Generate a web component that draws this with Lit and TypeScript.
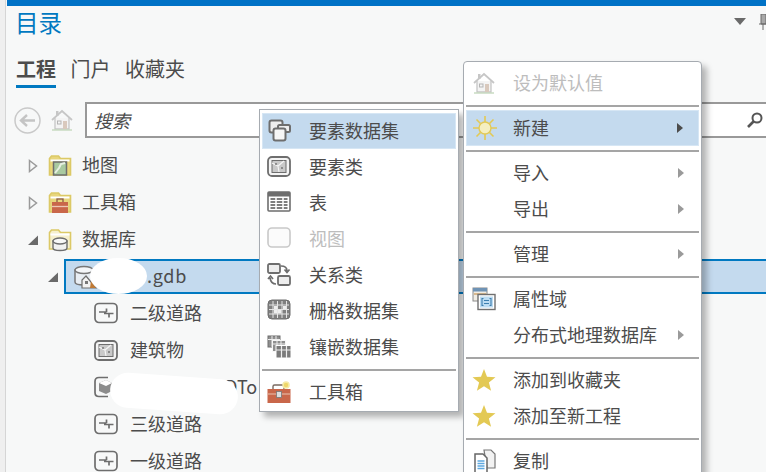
import { LitElement, html, css, svg } from "lit";
import { customElement } from "lit/decorators.js";

const G = "#6e6e6e";

const frame = (inner: unknown) => svg`<rect x="1" y="2" width="22" height="19" rx="4" fill="#f4f4f4" stroke="${G}" stroke-width="1.800"/>${inner}`;

const ICONS: Record<string, unknown> = {
  line: svg`<rect x="1" y="1.500" width="22" height="19" rx="4" fill="none" stroke="${G}" stroke-width="1.700"/><path d="M5 10h7.500M12.500 6.500v3.500M10 11.500h9.500M15 11.500v4" fill="none" stroke="${G}" stroke-width="1.700"/>`,
  poly: svg`${frame(svg`<rect x="5" y="5.500" width="14" height="12" fill="#c9c9c9" stroke="${G}"/><path d="M5 8l6 3 6-5M11 11l1 6" stroke="#f4f4f4" stroke-width="1.200" fill="none"/><circle cx="9" cy="9" r=".9" fill="${G}"/><circle cx="15" cy="13" r=".9" fill="${G}"/>`)}`,
  cube: svg`<path d="M14 1.500H5Q1 1.500 1 5.500v11q0 4 4 4h9" fill="none" stroke="${G}" stroke-width="1.700"/><path d="M5 7l7-3 6 3v8l-6 3-7-3z" fill="#8c8c8c"/><path d="M5 7l7-3 6 3-6 3z" fill="#fff"/>`,
  dataset: svg`<rect x="1.500" y="1.500" width="13" height="12" rx="2" fill="#eee" stroke="${G}" stroke-width="2"/><rect x="10" y="6" width="12" height="7" rx="1.500" fill="#eee" stroke="${G}" stroke-width="2"/><rect x="5.500" y="9.500" width="12" height="12" rx="2" fill="#f6f6f6" stroke="${G}" stroke-width="2"/>`,
  table: svg`<rect x="1" y="1" width="22" height="19" rx="1" fill="#fff" stroke="${G}" stroke-width="1.600"/><rect x="1" y="1" width="22" height="4.500" fill="${G}"/><path d="M3.500 8h17M3.500 11h17M3.500 14h17M3.500 17h17" stroke="#7d7d7d" stroke-width="1.800"/><path d="M9 6v13M16 6v13" stroke="#fff" stroke-width="1.500"/>`,
  view: svg`<rect x="1" y="1" width="22" height="19" rx="4" fill="#fbfbfb" stroke="#c9c9c9" stroke-width="1.600"/>`,
  relation: svg`<rect x="1" y="1" width="12" height="9" rx="1.500" fill="#eee" stroke="${G}" stroke-width="1.800"/><rect x="11" y="13" width="12" height="9" rx="1.500" fill="#eee" stroke="${G}" stroke-width="1.800"/><path d="M14 3q6 0 6 5M17.500 6.500l2.500 3 2.500-3M9 21q-5 0-6-6M1 16l2.500-3 2.500 3" fill="none" stroke="${G}" stroke-width="1.700"/>`,
  raster: svg`<rect x="1" y="1" width="22" height="19" rx="4" fill="#808080" stroke="${G}" stroke-width="1"/><path d="M6 2v17M10.500 2v17M15 2v17M19.500 2v17M2 6h20M2 10.500h20M2 15h20" stroke="#e4e4e4" stroke-width="1"/><rect x="7" y="7" width="3" height="3" fill="#eee"/><rect x="11" y="11" width="3.500" height="3.500" fill="#eee"/><rect x="16" y="7" width="3" height="3" fill="#eee"/><rect x="7" y="11" width="3" height="3.500" fill="#eee"/>`,
  mosaic: svg`<rect x="1" y="1" width="12" height="11" fill="#8f8f8f" stroke="${G}"/><path d="M1 4.500h12M5 1v11M9 1v11" stroke="#eee"/><rect x="5.500" y="5.500" width="13" height="11" fill="#8f8f8f" stroke="#f8f8f8"/><path d="M5.500 9h13M10 5.500v11M14 5.500v11" stroke="#eee"/><rect x="9" y="10.500" width="15" height="12.500" fill="#7b7b7b" stroke="#fff"/><path d="M9 15h15M14.500 11v12M19.500 11v12" stroke="#eee" stroke-width="1.200"/>`,
  toolboxNew: svg`<rect x="6" y="5" width="11" height="6" rx="1.500" fill="none" stroke="#7a6a60" stroke-width="1.400"/><rect x="0.500" y="9" width="23" height="14" fill="#c9674a"/><path d="M1 14h22" stroke="#e5b5a0" stroke-width="1.200"/><rect x="9.500" y="11.500" width="5" height="6" fill="#ddd" stroke="#777" stroke-width=".8"/><circle cx="19" cy="5" r="3" fill="#eed768" stroke="#f6eaa5" stroke-width="1.600"/>`,
  home: svg`<path d="M2 12L12 3l10 9" fill="none" stroke="#c6c6c6" stroke-width="1.700"/><path d="M5 10v11h14V10" fill="#f4f4f4" stroke="#c6c6c6" stroke-width="1.300"/><rect x="6" y="3" width="2.500" height="5" fill="#c6c6c6"/><rect x="7.500" y="13" width="3.500" height="3" fill="none" stroke="#b5b5b5"/><rect x="13" y="13" width="4" height="8" fill="#d9c9bd"/><path d="M2 22h20" stroke="#c4d8bd" stroke-width="1.400"/>`,
  sun: svg`<path d="M12 0v6M12 18v6M0 12h6M18 12h6M3.500 3.500l4 4M16.500 16.500l4 4M20.500 3.500l-4 4M7.500 16.500l-4 4" stroke="#e3c954" stroke-width="1.600"/><circle cx="12" cy="12" r="6" fill="#f5efc0" stroke="#e3c954" stroke-width="1.400"/>`,
  domain: svg`<rect x="1" y="1" width="14" height="13" fill="#f1ede4" stroke="#8a8a8a"/><rect x="1" y="1" width="14" height="3.500" fill="#6f93b5"/><path d="M2 7h12" stroke="#d9b98d" stroke-width="2"/><rect x="6" y="7.500" width="17" height="15" fill="#fff" stroke="#707070" stroke-width="1.400"/><rect x="8" y="9.500" width="13" height="11" fill="#bcdcf2"/><path d="M11.500 11.500h-1.500v7h1.500M17.500 11.500h1.500v7h-1.500M12 13.500h5M12 16.500h5" fill="none" stroke="#3d7fb0" stroke-width="1.100"/>`,
  star: svg`<path d="M12 1l3 7.700 8.500.5-6.600 5.300 2.200 8.200L12 18.200 4.900 22.700l2.200-8.200L.5 9.200 9 8.700z" fill="#e3c954"/>`,
  copy: svg`<path d="M12 1h7l4 4v14h-8z" fill="#f2f2f2" stroke="#777" stroke-width="1.200"/><path d="M3 5h8l4 4v15H3z" fill="#fff" stroke="#666" stroke-width="1.500"/><path d="M5.500 12h7M5.500 14.500h7M5.500 17h7M5.500 19.500h7" stroke="#5ea8e0" stroke-width="1.500"/>`,
};

const ic = (name: string) => html`<svg class="ic" viewBox="0 0 24 24" aria-hidden="true">${ICONS[name]}</svg>`;

type Entry = { sep: true } | { t: string; i?: string; on?: boolean; off?: boolean; more?: boolean; dark?: boolean };

const NEW_MENU: Entry[] = [
  { t: "要素数据集", i: "dataset", on: true },
  { t: "要素类", i: "poly" },
  { t: "表", i: "table" },
  { t: "视图", i: "view", off: true },
  { t: "关系类", i: "relation" },
  { t: "栅格数据集", i: "raster" },
  { t: "镶嵌数据集", i: "mosaic" },
  { sep: true },
  { t: "工具箱", i: "toolboxNew" },
];

const MAIN_MENU: Entry[] = [
  { t: "设为默认值", i: "home", off: true },
  { sep: true },
  { t: "新建", i: "sun", on: true, more: true, dark: true },
  { sep: true },
  { t: "导入", more: true },
  { t: "导出", more: true },
  { sep: true },
  { t: "管理", more: true },
  { sep: true },
  { t: "属性域", i: "domain" },
  { t: "分布式地理数据库", more: true },
  { sep: true },
  { t: "添加到收藏夹", i: "star" },
  { t: "添加至新工程", i: "star" },
  { sep: true },
  { t: "复制", i: "copy" },
];

const folder = (fill: string, inner: unknown) => html`<svg class="folder" viewBox="0 0 24 24" aria-hidden="true">
  <path d="M1.500 4.500V21h21V4.500h-10l-2-2.500h-7z" fill="${fill}" stroke="#dcc966" stroke-width="1.600"/>
  <path d="M2.500 6.500h19" stroke="#fff" stroke-width="2"/>${inner}</svg>`;

const FOLDERS = {
  map: folder("#e8d67c", svg`<rect x="5.500" y="8" width="13" height="13" fill="#a9c9a0" stroke="#6e6e6e" stroke-width="1.500"/><path d="M7 19l4-5 2-4 4-1" stroke="#e8efe2" stroke-width="2" fill="none"/>`),
  tool: folder("#e8d67c", svg`<rect x="9" y="8" width="6" height="4" fill="none" stroke="#8a5a48" stroke-width="1.300"/><rect x="4" y="11" width="16" height="11" fill="#c9674a"/><path d="M4 15.500h16" stroke="#eec8b6" stroke-width="1.300"/>`),
  db: folder("#f6f0cd", svg`<path d="M5 13v7q0 2.500 7 2.500t7-2.500v-7z" fill="#f1f1f1" stroke="#6e6e6e" stroke-width="1.400"/><ellipse cx="12" cy="13" rx="7" ry="3" fill="#f8f8f8" stroke="#6e6e6e" stroke-width="1.400"/>`),
};

const gdbIcon = html`<svg class="ic" viewBox="0 0 24 24" aria-hidden="true">
  <path d="M1 5v12q0 3 9 3t9-3V5z" fill="#e9eef3" stroke="#777" stroke-width="1.500"/>
  <ellipse cx="10" cy="5" rx="9" ry="3.500" fill="#f4f6f8" stroke="#777" stroke-width="1.500"/>
  <path d="M8 23V15l4-4 10 12z" fill="#f2f2f2" stroke="#6e6e6e" stroke-width="1.200"/>
  <rect x="11" y="16" width="3" height="3" fill="#777"/><path d="M17 16l5 7h-6z" fill="#c07a35"/></svg>`;

@customElement("app-root")
export class AppRoot extends LitElement {
  static styles = css`
    :host {
      display: block;
      position: relative;
      width: 766px;
      height: 472px;
      overflow: hidden;
      background: #f7f8f8;
      color: #4c4c4c;
      font-family: "Noto Sans CJK SC", "Noto Sans", sans-serif;
      font-size: 18px;
      line-height: 1;
    }
    .shell { display: flex; height: 472px; }
    .rail { width: 5px; flex: none; background: #efefef; border-right: 1px solid #d5d5d5; }
    .pane { flex: 1; min-width: 0; display: flex; flex-direction: column; }
    .topbar { height: 6px; background: #0072c6; margin-left: 1px; flex: none; }
    .title-row { height: 35px; flex: none; display: flex; align-items: center; padding-left: 9px; }
    .title { font-size: 23.5px; color: #0079c1; padding-bottom: 2px; }
    .pane-tools { margin-left: auto; display: flex; align-items: center; gap: 13px; margin-right: -1px; margin-top: -4px; }
    .tabs { display: flex; gap: 14.5px; padding-left: 10px; height: 47px; align-items: flex-start; padding-top: 14px; box-sizing: border-box; flex: none; }
    .tab { font-size: 20px; height: 33px; line-height: 27px; box-sizing: border-box; }
    .tab.active { font-weight: 700; border-bottom: 3px solid #0079c1; }
    .nav { display: flex; align-items: center; height: 36px; margin-top: 14px; flex: none; padding-left: 8px; }
    .back { width: 27px; height: 27px; flex: none; }
    .nav-home { width: 24px; height: 24px; margin-left: 9px; flex: none; }
    .search { flex: 1; height: 36px; margin-left: 11px; margin-right: -4px; box-sizing: border-box; border: 2px solid #999; background: #fff; display: flex; align-items: center; padding-left: 7px; font-style: italic; }
    .search-icon { margin-left: auto; margin-right: 4px; }
    .tree { margin-top: 9px; flex: none; }
    .row { height: 37px; display: flex; align-items: center; position: relative; }
    .row span { padding-bottom: 4px; }
    .tw { width: 10px; height: 14px; flex: none; }
    .l1 { padding-left: 22px; }
    .l1 .folder { margin-left: 10px; margin-right: 10px; }
    .folder { width: 24px; height: 24px; flex: none; }
    .l2 { padding-left: 42px; }
    .sel {
      margin-left: 6px; flex: 1; height: 35px; margin-right: -4px; box-sizing: border-box;
      background: #c4daee; border: 2px solid #0079c1; display: flex; align-items: center; padding-left: 8px;
    }
    .sel .name { margin-left: 49px; letter-spacing: .7px; }
    .l3 { padding-left: 88px; }
    .l3 .ic { margin-right: 12px; }
    .ic { width: 24px; height: 24px; flex: none; }
    .blob { position: absolute; background: #fff; }
    .blob.a { left: 84px; top: 0; width: 57px; height: 36px; border-radius: 50%; }
    .blob.b { left: 104px; top: 7px; width: 128px; height: 35px; border-radius: 18px; transform: rotate(4deg); }
    .row .hidden-lead { margin-left: 85px; }
    .menu {
      position: absolute; box-sizing: border-box; background: #fff;
      border: 1px solid #a6abb1; padding: 3px 2px 0; box-shadow: 5px 5px 6px rgba(0,0,0,.28);
    }
    .menu.sub { left: 259px; top: 109px; width: 200px; height: 303px; }
    .menu.main { left: 463px; top: 61px; width: 239px; height: 430px; border-radius: 4px; }
    .item { height: 36px; display: flex; align-items: center; box-sizing: border-box; position: relative; }
    .sub .item { padding-left: 5px; }
    .main .item { padding-left: 6px; }
    .sub .item .label { position: absolute; left: 47px; }
    .main .item .label { position: absolute; left: 47px; }
    .item.on { background: #c4daee; border: 1px solid #d6e6f4; }
    .item.on .label { left: 46px; }
    .item.off { color: #bdbdbd; }
    .label { white-space: nowrap; padding-bottom: 2px; }
    .more { margin-left: auto; margin-right: 15px; width: 0; height: 0; border-left: 6px solid #9a9a9a; border-top: 5px solid transparent; border-bottom: 5px solid transparent; }
    .more.dark { border-left-color: #4c4c4c; }
    .sep { height: 9px; display: flex; align-items: center; }
    .sep::before { content: ""; flex: 1; height: 2px; background: #a5a5a5; }
  `;

  private menu(cls: string, entries: Entry[]) {
    return html`<div class="menu ${cls}">
      ${entries.map((e) =>
        "sep" in e
          ? html`<div class="sep"></div>`
          : html`<div class="item ${e.on ? "on" : ""} ${e.off ? "off" : ""}">
              ${e.i ? ic(e.i) : ""}<span class="label">${e.t}</span>
              ${e.more ? html`<span class="more ${e.dark ? "dark" : ""}"></span>` : ""}
            </div>`
      )}
    </div>`;
  }

  render() {
    const closed = html`<svg class="tw" viewBox="0 0 10 14"><path d="M1.500 1.500L8.500 7l-7 5.500z" fill="#f7f8f8" stroke="#9a9a9a" stroke-width="1.500"/></svg>`;
    const open = html`<svg class="tw" viewBox="0 0 10 14"><path d="M10 2.500V12H0z" fill="#6a6a6a"/></svg>`;
    return html`
      <div class="shell">
        <div class="rail"></div>
        <div class="pane">
          <div class="topbar"></div>
          <div class="title-row">
            <span class="title">目录</span>
            <div class="pane-tools">
              <svg width="12" height="7" viewBox="0 0 12 7"><path d="M0 0h12L6 7z" fill="#6a6a6a"/></svg>
              <svg width="8" height="16" viewBox="0 0 8 16"><path d="M2 0h5v10H2zM0 10h8M4 10v6" fill="#a8a8a8" stroke="#6a6a6a"/></svg>
            </div>
          </div>
          <div class="tabs">
            <span class="tab active">工程</span><span class="tab">门户</span><span class="tab">收藏夹</span>
          </div>
          <div class="nav">
            <svg class="back" viewBox="0 0 27 27"><circle cx="13.500" cy="13.500" r="12.500" fill="none" stroke="#c9c9c9" stroke-width="1.500"/><path d="M21 13.500H8M13 8l-6 5.500 6 5.500" fill="none" stroke="#c4c4c4" stroke-width="2.400"/></svg>
            <svg class="nav-home" viewBox="0 0 24 24">${ICONS.home}</svg>
            <div class="search">
              <span>搜索</span>
              <svg class="search-icon" width="18" height="18" viewBox="0 0 18 18"><circle cx="11" cy="7" r="4.500" fill="none" stroke="#555" stroke-width="2"/><path d="M7.500 10.500L2 16" stroke="#555" stroke-width="2.600"/></svg>
            </div>
          </div>
          <div class="tree">
            <div class="row l1">${closed}${FOLDERS.map}<span>地图</span></div>
            <div class="row l1">${closed}${FOLDERS.tool}<span>工具箱</span></div>
            <div class="row l1">${open}${FOLDERS.db}<span>数据库</span></div>
            <div class="row l2">${open}
              <div class="sel">${gdbIcon}<span class="name">.gdb</span></div>
              <div class="blob a"></div>
            </div>
            <div class="row l3">${ic("line")}<span>二级道路</span></div>
            <div class="row l3">${ic("poly")}<span>建筑物</span></div>
            <div class="row l3">${ic("cube")}<span class="hidden-lead">3DTo</span><div class="blob b"></div></div>
            <div class="row l3">${ic("line")}<span>三级道路</span></div>
            <div class="row l3">${ic("line")}<span>一级道路</span></div>
          </div>
        </div>
      </div>
      ${this.menu("sub", NEW_MENU)}
      ${this.menu("main", MAIN_MENU)}
    `;
  }
}
